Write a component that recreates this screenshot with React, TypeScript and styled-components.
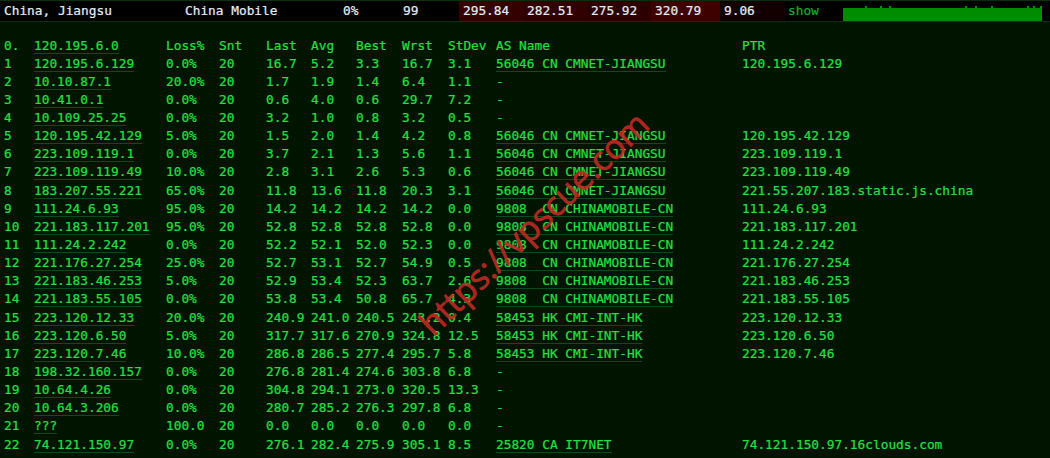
import { createGlobalStyle } from "styled-components";
import styled from "styled-components";

const GlobalStyle = createGlobalStyle`
  html, body {
    margin: 0;
    padding: 0;
    background: #001400;
  }
`;

const hops = [
  ["1", "120.195.6.129", "0.0%", "20", "16.7", "5.2", "3.3", "16.7", "3.1", "56046 CN CMNET-JIANGSU", "120.195.6.129"],
  ["2", "10.10.87.1", "20.0%", "20", "1.7", "1.9", "1.4", "6.4", "1.1", "-", ""],
  ["3", "10.41.0.1", "0.0%", "20", "0.6", "4.0", "0.6", "29.7", "7.2", "-", ""],
  ["4", "10.109.25.25", "0.0%", "20", "3.2", "1.0", "0.8", "3.2", "0.5", "-", ""],
  ["5", "120.195.42.129", "5.0%", "20", "1.5", "2.0", "1.4", "4.2", "0.8", "56046 CN CMNET-JIANGSU", "120.195.42.129"],
  ["6", "223.109.119.1", "0.0%", "20", "3.7", "2.1", "1.3", "5.6", "1.1", "56046 CN CMNET-JIANGSU", "223.109.119.1"],
  ["7", "223.109.119.49", "10.0%", "20", "2.8", "3.1", "2.6", "5.3", "0.6", "56046 CN CMNET-JIANGSU", "223.109.119.49"],
  ["8", "183.207.55.221", "65.0%", "20", "11.8", "13.6", "11.8", "20.3", "3.1", "56046 CN CMNET-JIANGSU", "221.55.207.183.static.js.china"],
  ["9", "111.24.6.93", "95.0%", "20", "14.2", "14.2", "14.2", "14.2", "0.0", "9808  CN CHINAMOBILE-CN", "111.24.6.93"],
  ["10", "221.183.117.201", "95.0%", "20", "52.8", "52.8", "52.8", "52.8", "0.0", "9808  CN CHINAMOBILE-CN", "221.183.117.201"],
  ["11", "111.24.2.242", "0.0%", "20", "52.2", "52.1", "52.0", "52.3", "0.0", "9808  CN CHINAMOBILE-CN", "111.24.2.242"],
  ["12", "221.176.27.254", "25.0%", "20", "52.7", "53.1", "52.7", "54.9", "0.5", "9808  CN CHINAMOBILE-CN", "221.176.27.254"],
  ["13", "221.183.46.253", "5.0%", "20", "52.9", "53.4", "52.3", "63.7", "2.6", "9808  CN CHINAMOBILE-CN", "221.183.46.253"],
  ["14", "221.183.55.105", "0.0%", "20", "53.8", "53.4", "50.8", "65.7", "4.3", "9808  CN CHINAMOBILE-CN", "221.183.55.105"],
  ["15", "223.120.12.33", "20.0%", "20", "240.9", "241.0", "240.5", "243.2", "0.4", "58453 HK CMI-INT-HK", "223.120.12.33"],
  ["16", "223.120.6.50", "5.0%", "20", "317.7", "317.6", "270.9", "324.8", "12.5", "58453 HK CMI-INT-HK", "223.120.6.50"],
  ["17", "223.120.7.46", "10.0%", "20", "286.8", "286.5", "277.4", "295.7", "5.8", "58453 HK CMI-INT-HK", "223.120.7.46"],
  ["18", "198.32.160.157", "0.0%", "20", "276.8", "281.4", "274.6", "303.8", "6.8", "-", ""],
  ["19", "10.64.4.26", "0.0%", "20", "304.8", "294.1", "273.0", "320.5", "13.3", "-", ""],
  ["20", "10.64.3.206", "0.0%", "20", "280.7", "285.2", "276.3", "297.8", "6.8", "-", ""],
  ["21", "???", "100.0", "20", "0.0", "0.0", "0.0", "0.0", "0.0", "-", ""],
  ["22", "74.121.150.97", "0.0%", "20", "276.1", "282.4", "275.9", "305.1", "8.5", "25820 CA IT7NET", "74.121.150.97.16clouds.com"],
];

const ticks = [865, 880, 889, 965, 975, 991, 1027, 1033, 1040];

const latencies = [
  { value: "295.84", width: 64, shade: "#340000" },
  { value: "282.51", width: 64, shade: "#300000" },
  { value: "275.92", width: 64, shade: "#2c0000" },
  { value: "320.79", width: 69, shade: "#3f0000" },
  { value: "9.06", width: 65, shade: "#120000" },
];

export default function App() {
  return (
    <Page>
      <GlobalStyle />
      <TopBar>
        <Location>China, Jiangsu</Location>
        <Carrier>China Mobile</Carrier>
        <Stat $width={60}>0%</Stat>
        <Stat $width={56}>99</Stat>
        {latencies.map((l) => (
          <Latency key={l.value} $width={l.width} $shade={l.shade}>
            {l.value}
          </Latency>
        ))}
        <ShowLink>show</ShowLink>
        <Spark viewBox="0 0 199 15" width="199" height="15">
          <rect x="0" y="2" width="199" height="13" fill="#008c00" />
          {ticks.map((t) => (
            <rect key={t} x={t - 843} y="0" width="2" height="3" fill="#008c00" />
          ))}
        </Spark>
      </TopBar>
      <Table>
        <Row>
          <span>0.</span>
          <Cell>
            <Linked>120.195.6.0</Linked>
          </Cell>
          <span>Loss%</span>
          <span>Snt</span>
          <span>Last</span>
          <span>Avg</span>
          <span>Best</span>
          <span>Wrst</span>
          <span>StDev</span>
          <span>AS Name</span>
          <span>PTR</span>
        </Row>
        {hops.map((h) => (
          <Row key={h[0]}>
            <span>{h[0]}</span>
            <Cell>
              <Linked>{h[1]}</Linked>
            </Cell>
            <span>{h[2]}</span>
            <span>{h[3]}</span>
            <span>{h[4]}</span>
            <span>{h[5]}</span>
            <span>{h[6]}</span>
            <span>{h[7]}</span>
            <span>{h[8]}</span>
            <Cell>{h[9] === "-" ? "-" : <Linked>{h[9]}</Linked>}</Cell>
            <span>{h[10]}</span>
          </Row>
        ))}
      </Table>
      <Watermark>https://vpscue.com</Watermark>
    </Page>
  );
}

const Page = styled.div`
  position: relative;
  width: 1050px;
  height: 458px;
  overflow: hidden;
  background: #001400;
  font-family: "DejaVu Sans Mono", "Liberation Mono", monospace;
  font-size: 12.8px;
  color: #22e042;
  -webkit-text-stroke: 0.2px currentColor;
`;

const TopBar = styled.div`
  display: flex;
  align-items: stretch;
  height: 20px;
  margin-top: 1px;
  background: #000;
  border-bottom: 1px solid #0b3010;
  box-shadow: 0 -1px 0 #0b3010;
  color: #e4edf5;
  line-height: 20px;
`;

const Location = styled.div`
  width: 181px;
  padding-left: 4px;
`;

const Carrier = styled.div`
  width: 158px;
`;

const Stat = styled.div<{ $width: number }>`
  width: ${({ $width }) => $width}px;
`;

const Latency = styled.div<{ $width: number; $shade: string }>`
  box-sizing: border-box;
  width: ${({ $width }) => $width}px;
  padding-left: 4px;
  background: ${({ $shade }) => $shade};
`;

const ShowLink = styled.div`
  width: 55px;
  padding-left: 3px;
  color: #0fb02c;
`;

const Spark = styled.svg`
  display: block;
  margin-top: 5px;
`;

const Table = styled.div`
  padding: 14.5px 0 0 4px;
`;

const Row = styled.div`
  display: grid;
  grid-template-columns: 30px 132px 53px 47px 45px 45px 46px 46px 48px 246px 1fr;
  height: 18.15px;
  line-height: 18px;
  white-space: pre;
`;

const Cell = styled.div`
  min-width: 0;
`;

const Linked = styled.span`
  display: inline-block;
  line-height: 14px;
  height: 14px;
  border-bottom: 1px solid #0b4a1a;
`;

const Watermark = styled.div`
  position: absolute;
  left: 382px;
  top: 206px;
  width: 300px;
  transform: rotate(-44deg);
  font-family: "Open Sans", "Liberation Sans", sans-serif;
  font-size: 34px;
  line-height: 36px;
  color: rgba(192, 42, 36, 0.9);
  -webkit-text-stroke: 0.7px currentColor;
  white-space: nowrap;
`;
